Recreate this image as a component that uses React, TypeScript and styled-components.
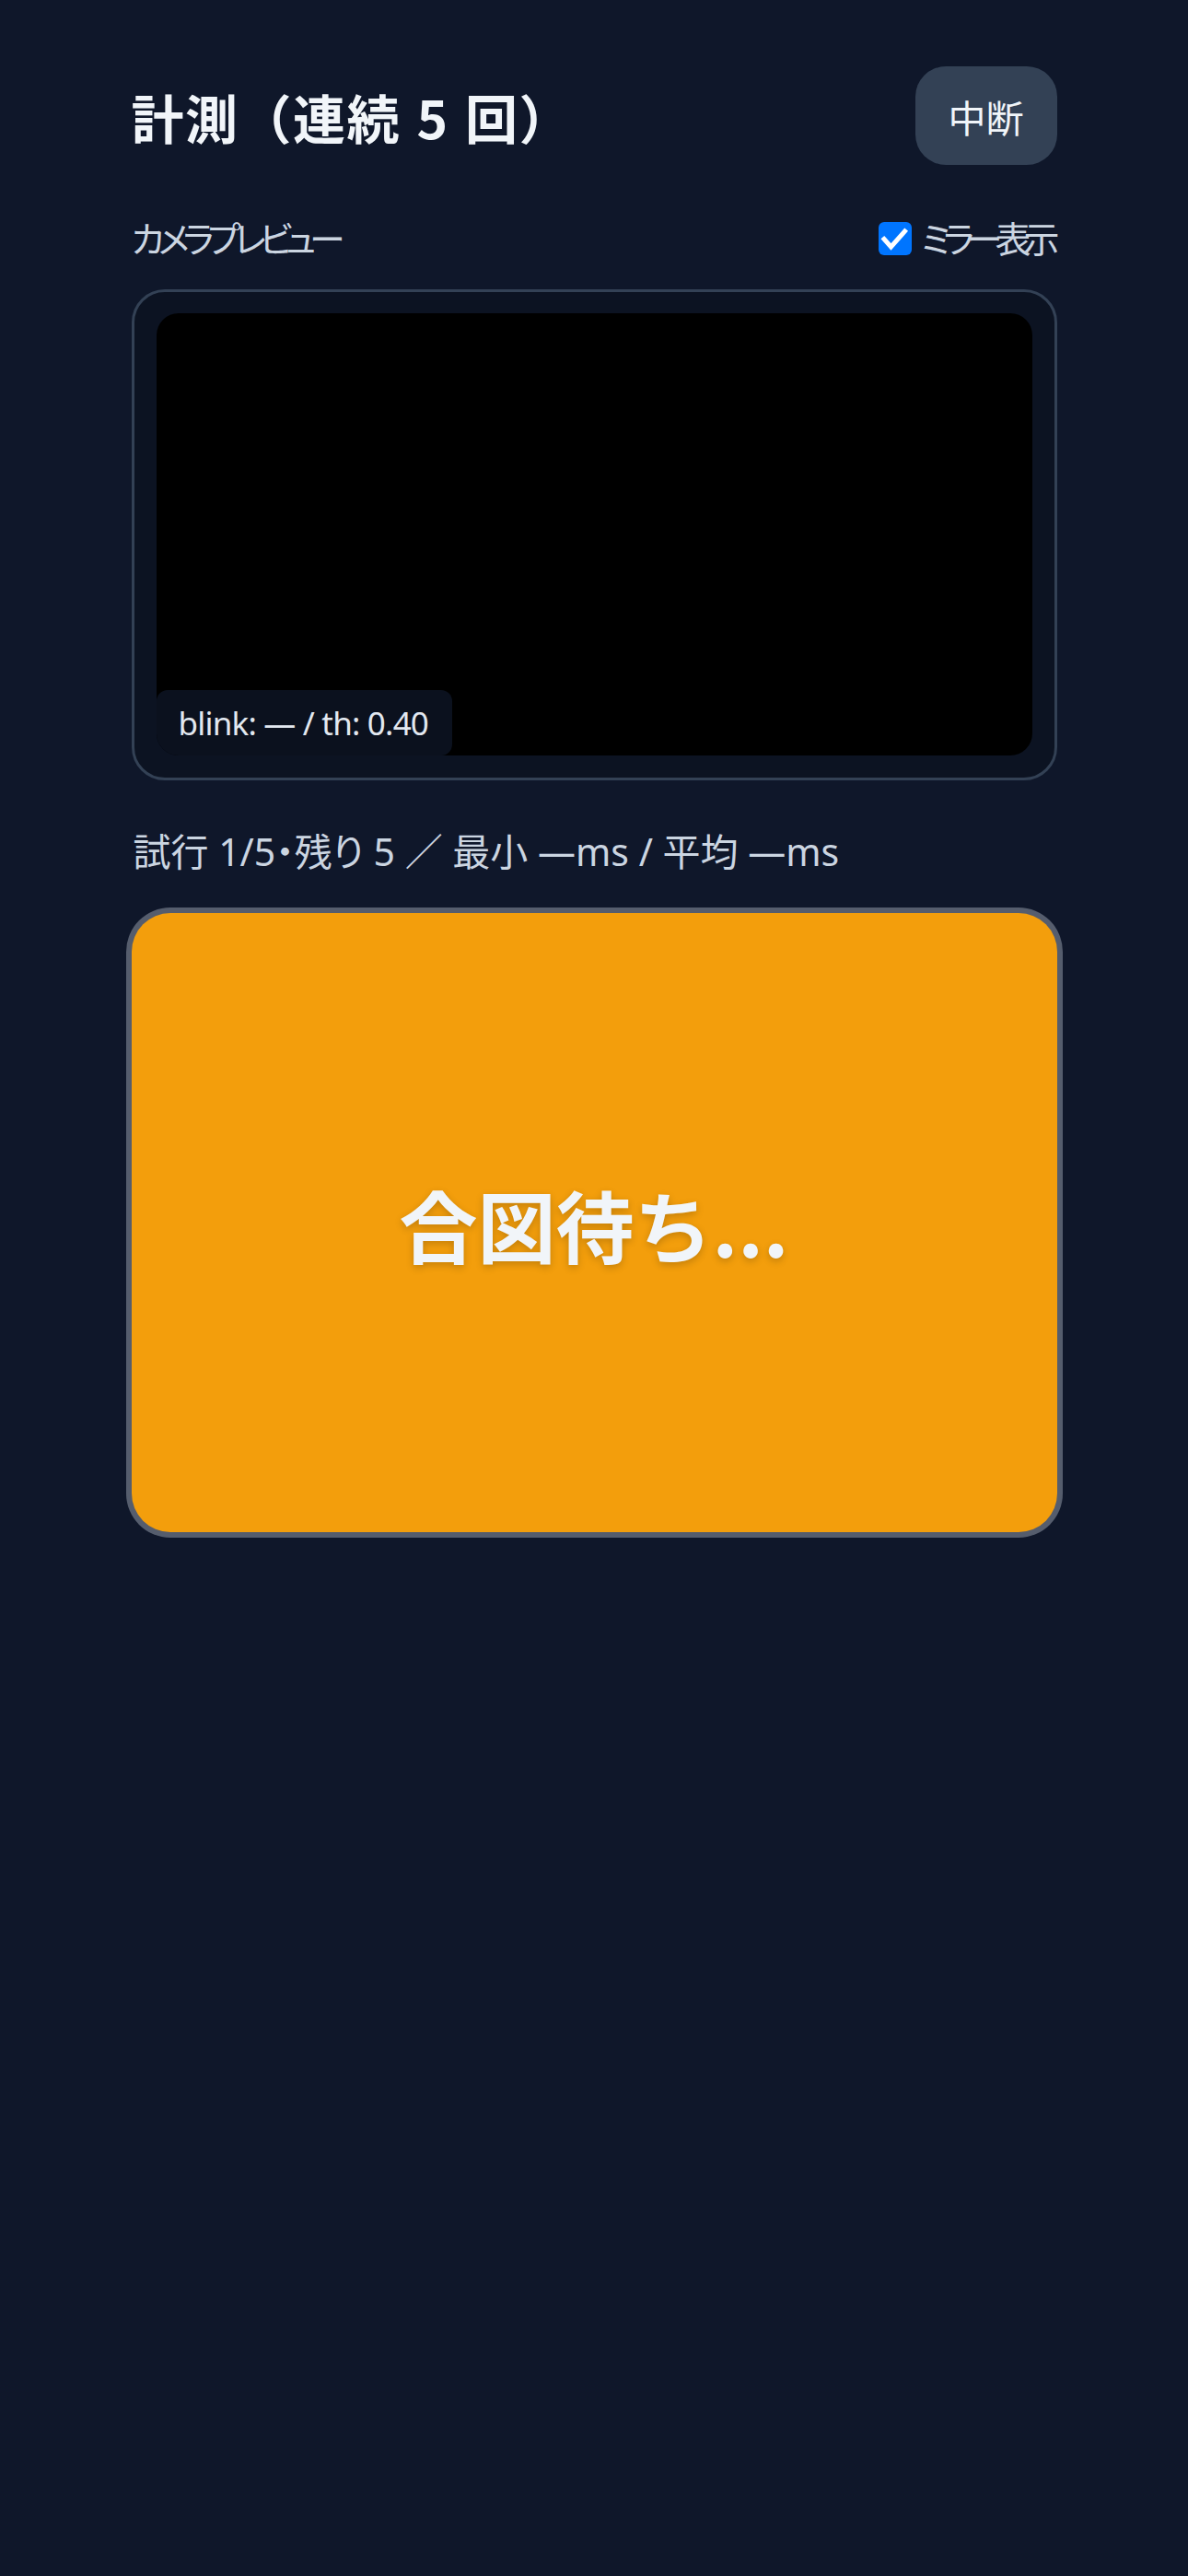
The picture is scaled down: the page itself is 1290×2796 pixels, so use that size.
import React, { useState } from "react";
import styled, { createGlobalStyle } from "styled-components";

const GlobalStyle = createGlobalStyle`
  html, body {
    margin: 0;
    padding: 0;
    background: #0f172a;
  }
  body {
    min-height: 2796px;
    font-family: "Noto Sans", "Noto Sans CJK JP", sans-serif;
    color: #f1f5f9;
  }
`;

const Page = styled.main`
  width: 1005px;
  margin: 0 auto;
  padding: 72px 0 0;
  display: flex;
  flex-direction: column;
`;

const Header = styled.header`
  height: 107px;
  display: flex;
  align-items: center;
  justify-content: space-between;
`;

const Title = styled.h1`
  margin: 2px 0 0;
  font-family: "Noto Sans CJK JP", sans-serif;
  font-size: 57px;
  font-weight: 700;
  color: #f1f5f9;
  line-height: 1;
  letter-spacing: 1.5px;
  word-spacing: 3px;
`;

const AbortButton = styled.button`
  height: 107px;
  padding: 0 36px;
  border: none;
  border-radius: 33px;
  background: #334155;
  color: #f1f5f9;
  font-family: "Noto Sans CJK JP", sans-serif;
  font-size: 41px;
  cursor: pointer;
`;

const LabelRow = styled.div`
  margin-top: 54px;
  height: 48px;
  display: flex;
  align-items: center;
  justify-content: space-between;
`;

const SectionLabel = styled.span<{ $tight?: number }>`
  font-family: "Noto Sans CJK JP", sans-serif;
  font-size: 39px;
  color: #cbd5e1;
  font-feature-settings: "palt";
  letter-spacing: ${(p) => p.$tight ?? -7}px;
`;

const MirrorToggle = styled.label`
  display: flex;
  align-items: center;
  gap: 10px;
  margin-right: 5px;
  cursor: pointer;
`;

const CheckBox = styled.span<{ $on: boolean }>`
  width: 36px;
  height: 36px;
  border-radius: 6px;
  background: ${(p) => (p.$on ? "#0075ff" : "#ffffff")};
  display: flex;
  align-items: center;
  justify-content: center;
  margin-top: 4px;
`;

const HiddenInput = styled.input`
  display: none;
`;

const PreviewFrame = styled.section`
  margin-top: 33px;
  border: 3px solid #334155;
  border-radius: 36px;
  background: #0c1322;
  padding: 23px 24px 24px;
`;

const Video = styled.div`
  position: relative;
  height: 480px;
  border-radius: 24px;
  background: #000000;
  overflow: hidden;
`;

const Badge = styled.div`
  position: absolute;
  left: 0;
  bottom: 0;
  height: 71px;
  padding: 0 26px 0 24px;
  display: flex;
  align-items: center;
  border-radius: 12px;
  background: rgba(15, 23, 42, 0.72);
  color: #e2e8f0;
  font-family: "Noto Sans", "Liberation Sans", sans-serif;
  font-size: 35px;
  letter-spacing: -0.8px;
`;

const Stats = styled.p`
  margin: 46px 0 0 2px;
  font-family: "Noto Sans", "Noto Sans CJK JP", sans-serif;
  font-size: 41px;
  line-height: 63px;
  color: #cbd5e1;
  font-feature-settings: "palt";
`;

const SignalButton = styled.button`
  margin-top: 35px;
  height: 672px;
  width: 100%;
  border: none;
  border-radius: 42px;
  background: #f39e0c;
  box-shadow: 0 0 0 6px #555d6d;
  color: #f1f5f9;
  font-family: "Noto Sans CJK JP", sans-serif;
  font-size: 85px;
  font-weight: 700;
  text-shadow: 0 3px 8px rgba(0, 0, 0, 0.2);
  cursor: pointer;
`;

export default function App() {
  const [mirror, setMirror] = useState(true);
  return (
    <>
      <GlobalStyle />
      <Page>
        <Header>
          <Title>計測（連続 5 回）</Title>
          <AbortButton>中断</AbortButton>
        </Header>
        <LabelRow>
          <SectionLabel>カメラプレビュー</SectionLabel>
          <MirrorToggle>
            <HiddenInput
              type="checkbox"
              checked={mirror}
              onChange={(e) => setMirror(e.target.checked)}
            />
            <CheckBox $on={mirror}>
              {mirror && (
                <svg width="36" height="36" viewBox="0 0 36 36">
                  <path
                    d="M6 18.5 L13.5 27 L28.5 10"
                    fill="none"
                    stroke="#ffffff"
                    strokeWidth="5"
                    strokeLinecap="square"
                    strokeLinejoin="miter"
                  />
                </svg>
              )}
            </CheckBox>
            <SectionLabel $tight={-8}>ミラー表示</SectionLabel>
          </MirrorToggle>
        </LabelRow>
        <PreviewFrame>
          <Video>
            <Badge>blink: — / th: 0.40</Badge>
          </Video>
        </PreviewFrame>
        <Stats>試行 1/5・残り 5 ／ 最小 —ms / 平均 —ms</Stats>
        <SignalButton>合図待ち...</SignalButton>
      </Page>
    </>
  );
}
